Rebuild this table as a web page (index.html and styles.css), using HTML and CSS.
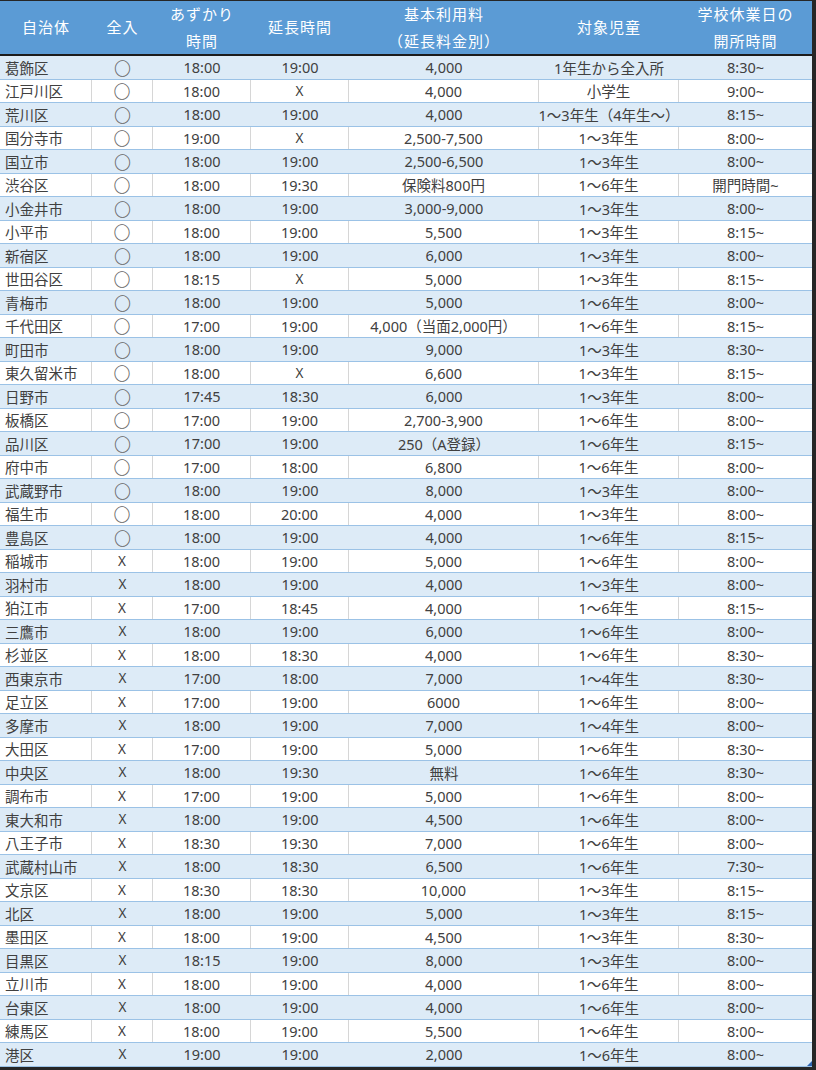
FILE: index.html
```html
<!DOCTYPE html>
<html lang="ja">
<head>
<meta charset="utf-8">
<title>学童保育 比較表</title>
<link rel="stylesheet" href="styles.css">
</head>
<body>
<div class="sheet">
<div class="table">
<div class="head">
<div class="h">自治体</div><div class="h">全入</div><div class="h">あずかり<br>時間</div><div class="h">延長時間</div><div class="h">基本利用料<br>（延長料金別）</div><div class="h">対象児童</div><div class="h">学校休業日の<br>開所時間</div>
</div>
<div class="row alt"><div class="c name">葛飾区</div><div class="c o">〇</div><div class="c">18:00</div><div class="c">19:00</div><div class="c">4,000</div><div class="c">1年生から全入所</div><div class="c">8:30~</div></div>
<div class="row"><div class="c name">江戸川区</div><div class="c o">〇</div><div class="c">18:00</div><div class="c x">X</div><div class="c">4,000</div><div class="c">小学生</div><div class="c">9:00~</div></div>
<div class="row alt"><div class="c name">荒川区</div><div class="c o">〇</div><div class="c">18:00</div><div class="c">19:00</div><div class="c">4,000</div><div class="c">1～3年生（4年生～）</div><div class="c">8:15~</div></div>
<div class="row"><div class="c name">国分寺市</div><div class="c o">〇</div><div class="c">19:00</div><div class="c x">X</div><div class="c">2,500-7,500</div><div class="c">1～3年生</div><div class="c">8:00~</div></div>
<div class="row alt"><div class="c name">国立市</div><div class="c o">〇</div><div class="c">18:00</div><div class="c">19:00</div><div class="c">2,500-6,500</div><div class="c">1～3年生</div><div class="c">8:00~</div></div>
<div class="row"><div class="c name">渋谷区</div><div class="c o">〇</div><div class="c">18:00</div><div class="c">19:30</div><div class="c">保険料800円</div><div class="c">1～6年生</div><div class="c">開門時間~</div></div>
<div class="row alt"><div class="c name">小金井市</div><div class="c o">〇</div><div class="c">18:00</div><div class="c">19:00</div><div class="c">3,000-9,000</div><div class="c">1～3年生</div><div class="c">8:00~</div></div>
<div class="row"><div class="c name">小平市</div><div class="c o">〇</div><div class="c">18:00</div><div class="c">19:00</div><div class="c">5,500</div><div class="c">1～3年生</div><div class="c">8:15~</div></div>
<div class="row alt"><div class="c name">新宿区</div><div class="c o">〇</div><div class="c">18:00</div><div class="c">19:00</div><div class="c">6,000</div><div class="c">1～3年生</div><div class="c">8:00~</div></div>
<div class="row"><div class="c name">世田谷区</div><div class="c o">〇</div><div class="c">18:15</div><div class="c x">X</div><div class="c">5,000</div><div class="c">1～3年生</div><div class="c">8:15~</div></div>
<div class="row alt"><div class="c name">青梅市</div><div class="c o">〇</div><div class="c">18:00</div><div class="c">19:00</div><div class="c">5,000</div><div class="c">1～6年生</div><div class="c">8:00~</div></div>
<div class="row"><div class="c name">千代田区</div><div class="c o">〇</div><div class="c">17:00</div><div class="c">19:00</div><div class="c">4,000（当面2,000円）</div><div class="c">1～6年生</div><div class="c">8:15~</div></div>
<div class="row alt"><div class="c name">町田市</div><div class="c o">〇</div><div class="c">18:00</div><div class="c">19:00</div><div class="c">9,000</div><div class="c">1～3年生</div><div class="c">8:30~</div></div>
<div class="row"><div class="c name">東久留米市</div><div class="c o">〇</div><div class="c">18:00</div><div class="c x">X</div><div class="c">6,600</div><div class="c">1～3年生</div><div class="c">8:15~</div></div>
<div class="row alt"><div class="c name">日野市</div><div class="c o">〇</div><div class="c">17:45</div><div class="c">18:30</div><div class="c">6,000</div><div class="c">1～3年生</div><div class="c">8:00~</div></div>
<div class="row"><div class="c name">板橋区</div><div class="c o">〇</div><div class="c">17:00</div><div class="c">19:00</div><div class="c">2,700-3,900</div><div class="c">1～6年生</div><div class="c">8:00~</div></div>
<div class="row alt"><div class="c name">品川区</div><div class="c o">〇</div><div class="c">17:00</div><div class="c">19:00</div><div class="c">250（A登録）</div><div class="c">1～6年生</div><div class="c">8:15~</div></div>
<div class="row"><div class="c name">府中市</div><div class="c o">〇</div><div class="c">17:00</div><div class="c">18:00</div><div class="c">6,800</div><div class="c">1～6年生</div><div class="c">8:00~</div></div>
<div class="row alt"><div class="c name">武蔵野市</div><div class="c o">〇</div><div class="c">18:00</div><div class="c">19:00</div><div class="c">8,000</div><div class="c">1～3年生</div><div class="c">8:00~</div></div>
<div class="row"><div class="c name">福生市</div><div class="c o">〇</div><div class="c">18:00</div><div class="c">20:00</div><div class="c">4,000</div><div class="c">1～3年生</div><div class="c">8:00~</div></div>
<div class="row alt"><div class="c name">豊島区</div><div class="c o">〇</div><div class="c">18:00</div><div class="c">19:00</div><div class="c">4,000</div><div class="c">1～6年生</div><div class="c">8:15~</div></div>
<div class="row"><div class="c name">稲城市</div><div class="c x">X</div><div class="c">18:00</div><div class="c">19:00</div><div class="c">5,000</div><div class="c">1～6年生</div><div class="c">8:00~</div></div>
<div class="row alt"><div class="c name">羽村市</div><div class="c x">X</div><div class="c">18:00</div><div class="c">19:00</div><div class="c">4,000</div><div class="c">1～3年生</div><div class="c">8:00~</div></div>
<div class="row"><div class="c name">狛江市</div><div class="c x">X</div><div class="c">17:00</div><div class="c">18:45</div><div class="c">4,000</div><div class="c">1～6年生</div><div class="c">8:15~</div></div>
<div class="row alt"><div class="c name">三鷹市</div><div class="c x">X</div><div class="c">18:00</div><div class="c">19:00</div><div class="c">6,000</div><div class="c">1～6年生</div><div class="c">8:00~</div></div>
<div class="row"><div class="c name">杉並区</div><div class="c x">X</div><div class="c">18:00</div><div class="c">18:30</div><div class="c">4,000</div><div class="c">1～6年生</div><div class="c">8:30~</div></div>
<div class="row alt"><div class="c name">西東京市</div><div class="c x">X</div><div class="c">17:00</div><div class="c">18:00</div><div class="c">7,000</div><div class="c">1～4年生</div><div class="c">8:30~</div></div>
<div class="row"><div class="c name">足立区</div><div class="c x">X</div><div class="c">17:00</div><div class="c">19:00</div><div class="c">6000</div><div class="c">1～6年生</div><div class="c">8:00~</div></div>
<div class="row alt"><div class="c name">多摩市</div><div class="c x">X</div><div class="c">18:00</div><div class="c">19:00</div><div class="c">7,000</div><div class="c">1～4年生</div><div class="c">8:00~</div></div>
<div class="row"><div class="c name">大田区</div><div class="c x">X</div><div class="c">17:00</div><div class="c">19:00</div><div class="c">5,000</div><div class="c">1～6年生</div><div class="c">8:30~</div></div>
<div class="row alt"><div class="c name">中央区</div><div class="c x">X</div><div class="c">18:00</div><div class="c">19:30</div><div class="c">無料</div><div class="c">1～6年生</div><div class="c">8:30~</div></div>
<div class="row"><div class="c name">調布市</div><div class="c x">X</div><div class="c">17:00</div><div class="c">19:00</div><div class="c">5,000</div><div class="c">1～6年生</div><div class="c">8:00~</div></div>
<div class="row alt"><div class="c name">東大和市</div><div class="c x">X</div><div class="c">18:00</div><div class="c">19:00</div><div class="c">4,500</div><div class="c">1～6年生</div><div class="c">8:00~</div></div>
<div class="row"><div class="c name">八王子市</div><div class="c x">X</div><div class="c">18:30</div><div class="c">19:30</div><div class="c">7,000</div><div class="c">1～6年生</div><div class="c">8:00~</div></div>
<div class="row alt"><div class="c name">武蔵村山市</div><div class="c x">X</div><div class="c">18:00</div><div class="c">18:30</div><div class="c">6,500</div><div class="c">1～6年生</div><div class="c">7:30~</div></div>
<div class="row"><div class="c name">文京区</div><div class="c x">X</div><div class="c">18:30</div><div class="c">18:30</div><div class="c">10,000</div><div class="c">1～3年生</div><div class="c">8:15~</div></div>
<div class="row alt"><div class="c name">北区</div><div class="c x">X</div><div class="c">18:00</div><div class="c">19:00</div><div class="c">5,000</div><div class="c">1～3年生</div><div class="c">8:15~</div></div>
<div class="row"><div class="c name">墨田区</div><div class="c x">X</div><div class="c">18:00</div><div class="c">19:00</div><div class="c">4,500</div><div class="c">1～3年生</div><div class="c">8:30~</div></div>
<div class="row alt"><div class="c name">目黒区</div><div class="c x">X</div><div class="c">18:15</div><div class="c">19:00</div><div class="c">8,000</div><div class="c">1～3年生</div><div class="c">8:00~</div></div>
<div class="row"><div class="c name">立川市</div><div class="c x">X</div><div class="c">18:00</div><div class="c">19:00</div><div class="c">4,000</div><div class="c">1～6年生</div><div class="c">8:00~</div></div>
<div class="row alt"><div class="c name">台東区</div><div class="c x">X</div><div class="c">18:00</div><div class="c">19:00</div><div class="c">4,000</div><div class="c">1～6年生</div><div class="c">8:00~</div></div>
<div class="row"><div class="c name">練馬区</div><div class="c x">X</div><div class="c">18:00</div><div class="c">19:00</div><div class="c">5,500</div><div class="c">1～6年生</div><div class="c">8:00~</div></div>
<div class="row alt last"><div class="c name">港区</div><div class="c x">X</div><div class="c">19:00</div><div class="c">19:00</div><div class="c">2,000</div><div class="c">1～6年生</div><div class="c">8:00~</div><span class="handle"></span></div>
</div>
</div>
</body>
</html>
```
FILE: styles.css
```css
html, body {
  margin: 0;
  padding: 0;
  background: #262626;
}

.sheet {
  width: 816px;
  height: 1070px;
  box-sizing: border-box;
  padding-top: 1px;
  background: #262626;
  overflow: hidden;
}

.table {
  width: 812px;
  font-family: "Noto Sans", "Noto Sans CJK JP", sans-serif;
}

.head,
.row {
  display: grid;
  grid-template-columns: 92px 61px 98px 98px 190px 140px 133px;
}

.head {
  height: 55px;
  box-sizing: border-box;
  background: #5b9bd5;
  border-bottom: 2px solid #1c1c1c;
}

.h {
  display: flex;
  align-items: center;
  justify-content: center;
  text-align: center;
  color: #ffffff;
  font-family: "Noto Sans CJK JP", sans-serif;
  font-size: 15px;
  letter-spacing: 1px;
  line-height: 26.5px;
}

.row {
  position: relative;
  height: 23.5px;
  box-sizing: border-box;
  border-bottom: 1px solid #9bc2e6;
  background: #ffffff;
}

.row.alt {
  background: #ddebf7;
}

.row:not(.alt) .c {
  border-right: 1px solid #d6d6d6;
}

.row:not(.alt) .c:last-child {
  border-right: none;
}

.c {
  display: flex;
  align-items: center;
  justify-content: center;
  font-size: 14.5px;
  color: #404040;
  white-space: nowrap;
  overflow: hidden;
}

.c.name {
  justify-content: flex-start;
  padding-left: 5px;
}

.c.o {
  color: #666666;
  font-family: "Noto Sans CJK JP", sans-serif;
  font-size: 17px;
  font-weight: 300;
}

.c.x {
  font-size: 13.5px;
}

.handle {
  position: absolute;
  right: 0;
  bottom: 0;
  width: 0;
  height: 0;
  border-left: 5px solid transparent;
  border-bottom: 5px solid #2e64b0;
}
```
